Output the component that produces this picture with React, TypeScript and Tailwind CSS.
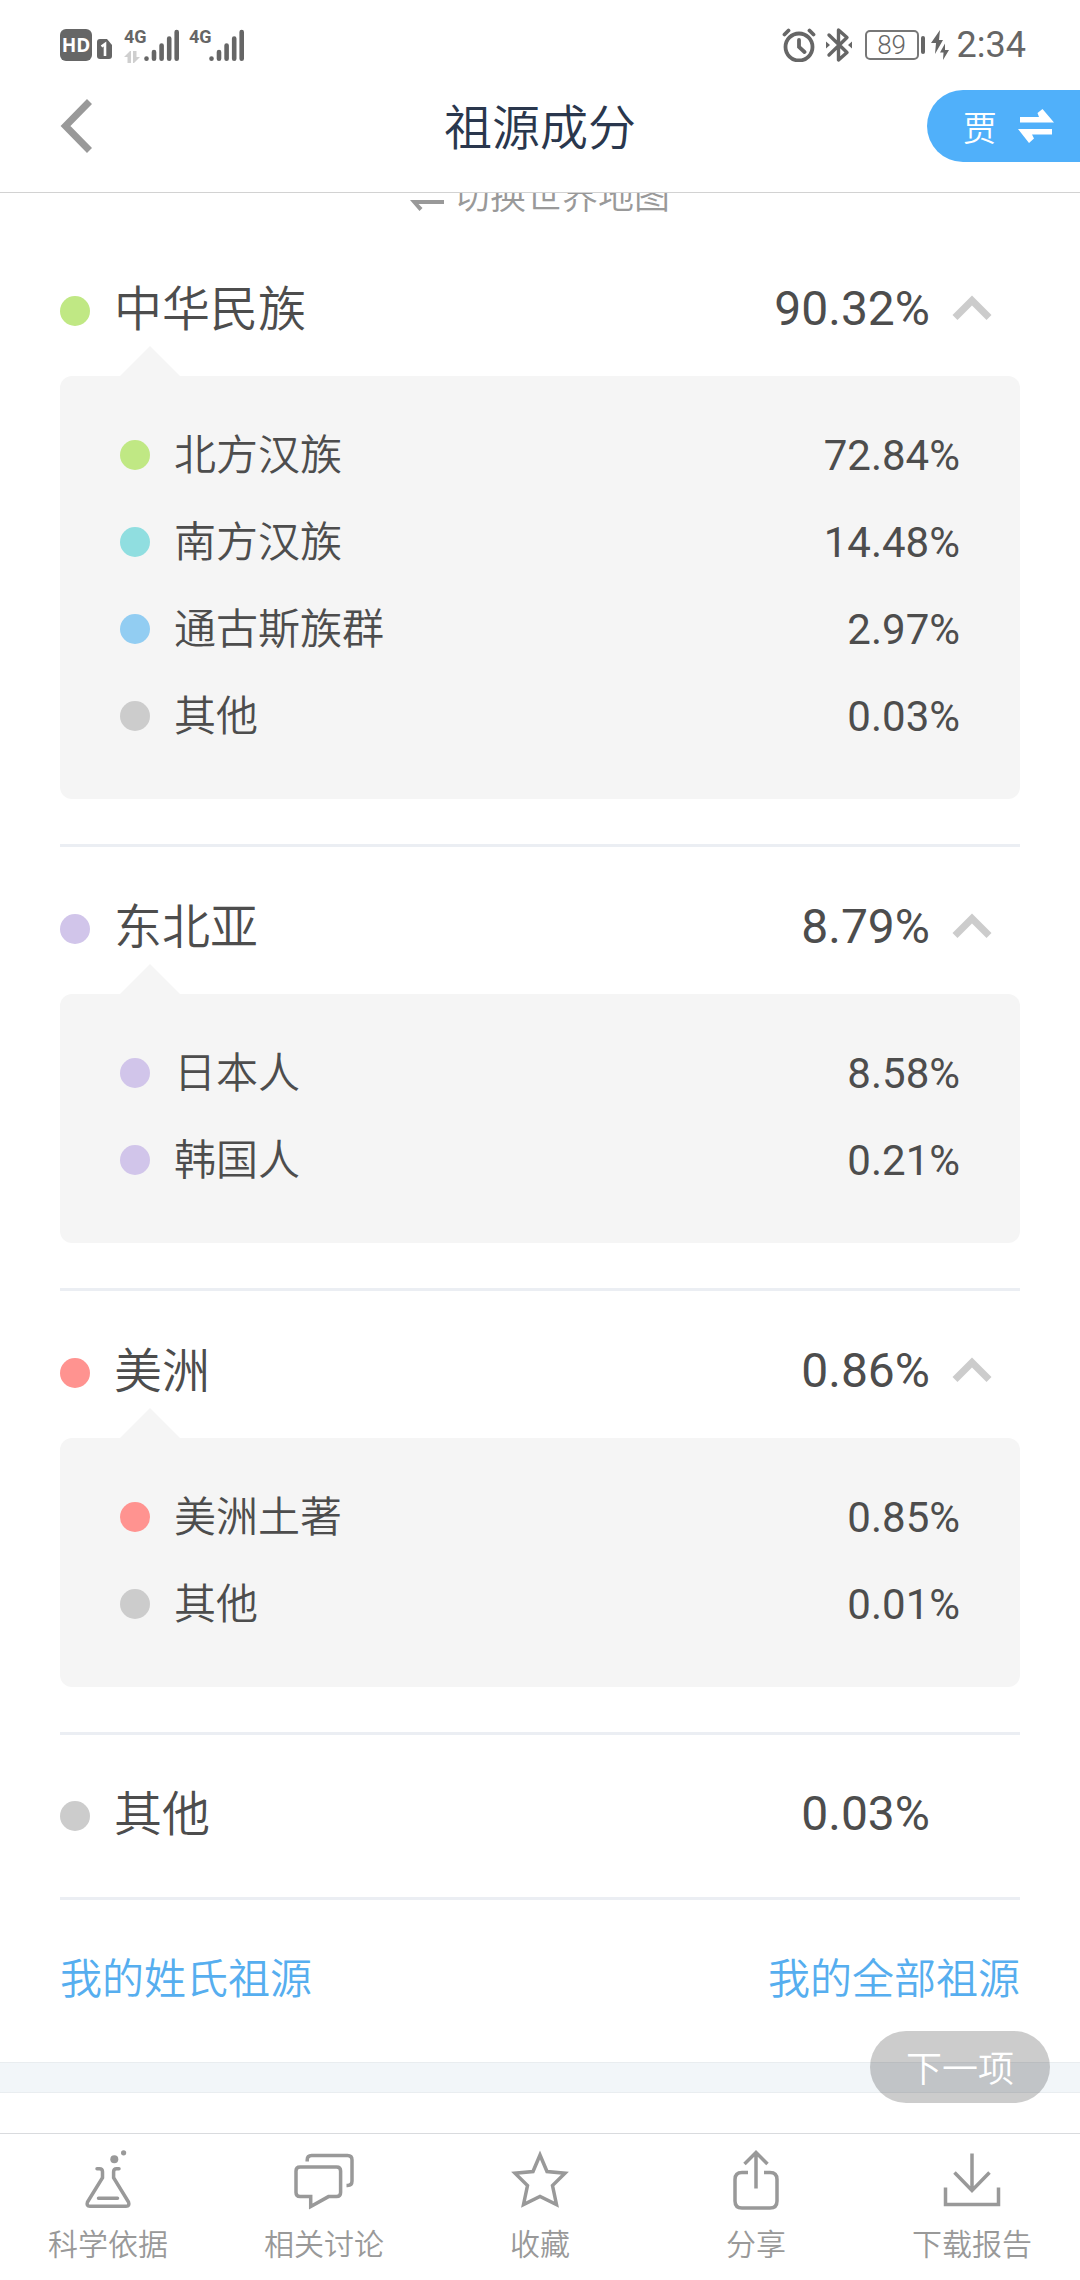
import type { ReactNode } from "react";

type Row = { name: string; value: string; dot: string };
type Group = Row & { children: Row[] };

const groups: Group[] = [
  {
    name: "中华民族",
    value: "90.32%",
    dot: "bg-[#c0e884]",
    children: [
      { name: "北方汉族", value: "72.84%", dot: "bg-[#c0e884]" },
      { name: "南方汉族", value: "14.48%", dot: "bg-[#90dee0]" },
      { name: "通古斯族群", value: "2.97%", dot: "bg-[#92cdf2]" },
      { name: "其他", value: "0.03%", dot: "bg-[#cccccc]" },
    ],
  },
  {
    name: "东北亚",
    value: "8.79%",
    dot: "bg-[#d1c5ea]",
    children: [
      { name: "日本人", value: "8.58%", dot: "bg-[#d1c5ea]" },
      { name: "韩国人", value: "0.21%", dot: "bg-[#d1c5ea]" },
    ],
  },
  {
    name: "美洲",
    value: "0.86%",
    dot: "bg-[#ff9390]",
    children: [
      { name: "美洲土著", value: "0.85%", dot: "bg-[#ff9390]" },
      { name: "其他", value: "0.01%", dot: "bg-[#cccccc]" },
    ],
  },
  { name: "其他", value: "0.03%", dot: "bg-[#cccccc]", children: [] },
];

function Signal({ data }: { data?: boolean }) {
  return (
    <div className="flex items-end">
      <div className="flex h-9 w-5 flex-col justify-between">
        <span className="font-['Roboto'] text-[18px] leading-5 font-bold">4G</span>
        {data && (
          <svg viewBox="0 0 18 12" className="h-3 w-[18px]" fill="#cfcfcf" aria-hidden="true">
            <path d="M0 6 6 0h1v12H3.500V6zM9 0h3.500v6H16l-6 6H9z" />
          </svg>
        )}
      </div>
      <svg viewBox="0 0 36 36" className="h-9 w-9" stroke="currentColor" strokeWidth="4.600" strokeLinecap="round" aria-hidden="true">
        <path d="M2.500 31.500v.2M10 25v6.700M17.600 18.500v13.200M25.200 11.500v20.200M32.700 5v26.700" />
      </svg>
    </div>
  );
}

function StatusBar() {
  return (
    <div className="flex h-[90px] items-center justify-between pr-[54px] pl-[60px] text-[#666]">
      <div className="flex items-center">
        <span className="flex size-8 items-center justify-center rounded-md bg-[#666] font-['Open_Sans'] text-[19px] font-bold text-white">
          HD
        </span>
        <svg viewBox="0 0 15 20" className="mt-2 ml-[5px] h-5 w-[15px]" aria-hidden="true">
          <path d="M3 0h7l5 6v11a3 3 0 0 1-3 3H3a3 3 0 0 1-3-3V3a3 3 0 0 1 3-3z" fill="currentColor" />
          <path d="M4.500 7.500 8 5v12" fill="none" stroke="#fff" strokeWidth="2.600" />
        </svg>
        <div className="ml-3 flex gap-[9px]">
          <Signal data />
          <Signal />
        </div>
      </div>
      <div className="flex items-center">
        <svg viewBox="0 0 34 34" className="size-[34px]" fill="none" stroke="currentColor" strokeWidth="3.800" strokeLinecap="round" aria-hidden="true">
          <circle cx="17" cy="19" r="13.500" />
          <path d="M17 12v7l5.500 5M2.500 6.500 6.500 2.500M31.500 6.500l-4-4" />
        </svg>
        <svg viewBox="0 0 28 36" className="ml-[9px] h-9 w-7" fill="none" stroke="currentColor" strokeWidth="3.400" aria-hidden="true">
          <path d="m4 8 18 17.500-8.500 7.500V3L22 10.500 4 28" strokeLinejoin="round" strokeLinecap="round" />
          <path d="m1 14.500 4 3.500-4 3.500zM27 14.500 23 18l4 3.500z" fill="currentColor" stroke="none" />
        </svg>
        <span className="ml-3 flex h-[30px] w-[54px] items-center justify-center rounded-[5px] border-2 border-[#777] font-['Roboto'] text-[26px] leading-none">
          89
        </span>
        <span className="ml-0.5 h-[18px] w-1 rounded-sm bg-[#666]" />
        <svg viewBox="0 0 18 30" className="ml-[6px] h-[30px] w-[18px]" fill="currentColor" aria-hidden="true">
          <path d="M9 0 0 13h5L4 24l8-14H8zM14 13.500 9 22.500h3.500L12 30l6-10h-4z" />
        </svg>
        <span className="ml-2 font-['Roboto'] text-[36px] leading-none font-normal">2:34</span>
      </div>
    </div>
  );
}

function Header() {
  return (
    <header className="relative z-10 h-[193px] border-b border-[#d2d2d2] bg-white">
      <StatusBar />
      <div className="grid h-[72px] grid-cols-3 items-center">
        <button type="button" aria-label="返回" className="ml-[60px] justify-self-start">
          <svg viewBox="0 0 33 54" className="h-[54px] w-[33px]" fill="none" stroke="#999" strokeWidth="7" aria-hidden="true">
            <path d="M29.500 2.500 5.500 27l24 24.500" />
          </svg>
        </button>
        <h1 className="pb-1 text-center text-[48px] leading-[68px] text-[#2a374d]">祖源成分</h1>
        <button type="button" className="flex h-[72px] items-center gap-[21px] justify-self-end rounded-l-full bg-[#50b0fa] pr-[26px] pl-9 text-[34px] text-white">
          贾
          <svg viewBox="0 0 36 34" className="h-[34px] w-9" fill="currentColor" aria-hidden="true">
            <path d="M2 8h19l-1.500-4L24.500 0 36 13.500H2zM34 25.500H14l2 4L11 34 0 20h34z" />
          </svg>
        </button>
      </div>
    </header>
  );
}

function Dot({ color }: { color: string }) {
  return <span className={`size-[30px] shrink-0 rounded-full ${color}`} />;
}

function GroupSection({ group }: { group: Group }) {
  const expandable = group.children.length > 0;
  return (
    <section className="border-b-[3px] border-[#ebeef3] pb-[45px]">
      <div className={`flex items-center pt-[45px] ${expandable ? "h-[147px] pb-7" : "h-[117px]"}`}>
        <Dot color={group.dot} />
        <h2 className="ml-6 flex-1 pb-3 text-[48px] leading-[60px]">{group.name}</h2>
        <span className="pb-1 font-['Roboto'] text-[48px] leading-[60px] font-normal">{group.value}</span>
        {expandable ? (
          <button type="button" aria-label={`收起${group.name}`} className="mr-[28px] ml-[22px] pb-1.5">
            <svg viewBox="0 0 40 26" className="h-[26px] w-10" fill="none" stroke="#ccc" strokeWidth="7" aria-hidden="true">
              <path d="M3 22.500 20 5.500l17 17" />
            </svg>
          </button>
        ) : (
          <span className="w-[90px]" />
        )}
      </div>
      {expandable && (
        <div className="relative rounded-xl bg-[#f5f5f5] px-[60px] pt-[35px] pb-10">
          <svg viewBox="0 0 60 30" className="absolute -top-[30px] left-[60px] h-[30px] w-[60px]" aria-hidden="true">
            <path d="M0 30 30 0l30 30z" fill="#f5f5f5" />
          </svg>
          <ul>
            {group.children.map((row) => (
              <li key={row.name} className="flex h-[87px] items-center">
                <Dot color={row.dot} />
                <span className="ml-6 flex-1 pb-1.5 text-[42px] leading-[60px]">{row.name}</span>
                <span className="pt-0.5 font-['Roboto'] text-[42px] leading-[60px] font-normal">{row.value}</span>
              </li>
            ))}
          </ul>
        </div>
      )}
    </section>
  );
}

function Tool({ label, children }: { label: string; children: ReactNode }) {
  return (
    <button type="button" className="flex flex-col items-center gap-2 pt-[14px] text-[30px] leading-[44px] text-[#999]">
      <svg viewBox="0 0 60 64" className="h-16 w-[60px]" fill="none" stroke="currentColor" strokeWidth="3.500" aria-hidden="true">
        {children}
      </svg>
      {label}
    </button>
  );
}

function Toolbar() {
  return (
    <nav className="relative z-10 grid grow grid-cols-5 border-t border-[#d9dbde] bg-white">
      <Tool label="科学依据">
        <path d="M19 20.700h2.500q3 0 3 3v6L9.500 54q-1.500 4.300 2.500 4.300h36q4 0 2.500-4.300L35.600 29.700v-6q0-3 3-3H41M20.500 50.200h19" strokeLinecap="round" />
        <circle cx="36.300" cy="11.300" r="4" fill="currentColor" stroke="none" />
        <circle cx="45.600" cy="4.800" r="2.600" fill="currentColor" stroke="none" />
      </Tool>
      <Tool label="相关讨论">
        <path d="M16.700 48.600H6q-4 0-4-4V23q0-4 4-4h36.600q4 0 4 4v21.600q0 4-4 4h-8.100L16.700 58.500z" />
        <path d="M13.200 13.500V12q0-4.500 4.500-4.500h35.800q4.500 0 4.500 4.500v21q0 4.500-4.500 4.500h-1" />
      </Tool>
      <Tool label="收藏">
        <path d="m30 7 7 16.500 18 1.700L42.500 37.500l4 19L30 48.500l-16.500 8 4-19L5 25.200l18-1.700z" />
      </Tool>
      <Tool label="分享">
        <path d="M22 24.500h-6q-7 0-7 7V53q0 7 7 7h28q7 0 7-7V31.500q0-7-7-7h-6M30 40.500V4.500M18.500 16 30 4.500 41.500 16" />
      </Tool>
      <Tool label="下载报告">
        <path d="M30 5.500v37M12.500 24.500 30 42.500l17.500-18M3.500 39.500v17h53v-17" />
      </Tool>
    </nav>
  );
}

export default function App() {
  return (
    <div className="flex min-h-screen flex-col bg-white font-['Noto_Sans_CJK_SC',sans-serif] font-[350] text-[#4d4d4d]">
      <Header />
      <main className="-mt-6 px-[60px]">
        <button type="button" className="mx-auto flex h-[60px] items-start gap-2.5 text-[36px] leading-[48px] text-[#999]">
          <svg viewBox="0 0 34 34" className="mt-2 size-[34px]" fill="currentColor" aria-hidden="true">
            <path d="M0 11h34L24.500 0l-3 3 4 4H0zM34 23H0l9.500 11 3-3-4-4H34z" />
          </svg>
          切换世界地图
        </button>
        {groups.map((group, i) => (
          <GroupSection key={i} group={group} />
        ))}
        <div className="flex items-center justify-between pt-[46px] pb-[56px] text-[42px] leading-[60px] text-[#56aeef]">
          <a href="#surname">我的姓氏祖源</a>
          <a href="#all">我的全部祖源</a>
        </div>
      </main>
      <div className="relative mb-10 h-[31px] border-y border-[#e9edf0] bg-[#f2f6f9]">
        <button type="button" className="absolute -top-8 right-[30px] h-[72px] w-[180px] rounded-full bg-black/20 pb-0.5 text-[36px] leading-[70px] text-white">
          下一项
        </button>
      </div>
      <Toolbar />
    </div>
  );
}
